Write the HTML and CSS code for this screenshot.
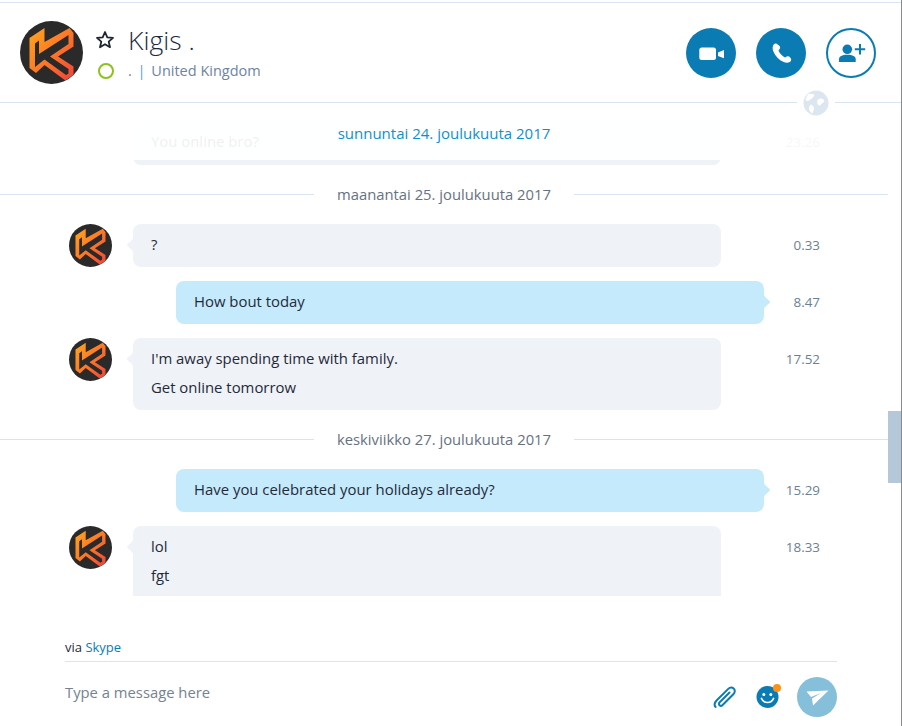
FILE: index.html
```html
<!DOCTYPE html>
<html>
<head>
    <title>Kigis . - Skype</title>
    <link rel="stylesheet" href="styles.css">
</head>
<body>
    <svg class="defs" width="0" height="0">
        <defs>
            <linearGradient id="logoGrad" x1="0.1" y1="0.1" x2="0.9" y2="0.9">
                <stop offset="0" stop-color="#ff9d1e"/>
                <stop offset="0.55" stop-color="#fb7428"/>
                <stop offset="1" stop-color="#f34c38"/>
            </linearGradient>
            <clipPath id="logoClip">
                <circle cx="31.5" cy="31.5" r="31"/>
            </clipPath>
            <symbol id="logo" viewBox="0 0 63 63">
                <circle cx="31.5" cy="31.5" r="31.5" fill="#2a2a2b"/>
                <g clip-path="url(#logoClip)">
                    <path d="M9.500 17L24.500 7V21L49.500 7L53.500 12V25.500L38 35.500L53.500 45.500V55L46 60L24.500 44L16 52L9.500 47Z" fill="url(#logoGrad)"/>
                    <path d="M15 22.500L19 19.500V33L48.500 14V23L30 35.500L48.500 48V52.500L46 54L24.500 38.500L15 46Z" fill="#2a2a2b"/>
                </g>
            </symbol>
        </defs>
    </svg>

    <div class="page">
        <header class="top">
            <svg class="avatar-big"><use href="#logo"/></svg>
            <div class="info">
                <svg class="star" viewBox="0 0 20 20">
                    <path d="M10 2l2.300 5.300 5.700.5-4.300 3.800 1.300 5.600-5-3-5 3 1.300-5.600L2 7.800l5.700-.5z" fill="none" stroke="#1d2533" stroke-width="1.800" stroke-linejoin="round"/>
                </svg>
                <div class="name">Kigis .</div>
                <div class="ring"></div>
                <div class="sub">. <span class="pipe">|</span> United Kingdom</div>
            </div>
            <div class="actions">
                <div class="round">
                    <svg viewBox="0 0 50 50" width="50" height="50">
                        <rect x="13.300" y="19.500" width="16.700" height="12.500" rx="2.500" fill="#fff"/>
                        <path d="M32 24.500L38 22V30.300L32 28z" fill="#fff"/>
                    </svg>
                </div>
                <div class="round">
                    <svg viewBox="0 0 50 50" width="50" height="50">
                        <path d="M21 16c-1-.8-2.600-.6-3.300.5-1.400 2-1.300 4.500-.4 6.700 2 4.800 5.600 8.700 10.400 10.800 2 .9 4.300 1 6.200-.1 1.200-.7 1.700-2.200 1-3.300l-1-1.400c-.7-1-2-1.200-3.100-.7l-1.700.9c-3-1.300-5.300-3.800-6.600-6.900l1.100-1.500c.7-.9.700-2.200 0-3.100z" fill="#fff"/>
                    </svg>
                </div>
                <div class="round outline">
                    <svg viewBox="0 0 50 50" width="50" height="50">
                        <circle cx="21.300" cy="21.300" r="4.800" fill="#0a7cb3"/>
                        <path d="M13 34v-2.800c0-2.800 3-4.500 8.300-4.500s8.400 1.700 8.400 4.500V34z" fill="#0a7cb3"/>
                        <path d="M34 16v10.500M28.800 21.300h10.400" stroke="#0a7cb3" stroke-width="2"/>
                    </svg>
                </div>
            </div>
            <div class="globe">
                <svg viewBox="0 0 26 26" width="26" height="26">
                    <circle cx="13" cy="13" r="12.500" fill="#dce6f0"/>
                    <path d="M6 3.500c2 .5 4 .3 5.500 1.500-.5 2-2.500 3-4 4.500C6 11 4 11.500 2.500 10 3 7.500 4 5 6 3.500zM14.500 10c2-1.500 4.500-2 6-.5 1 1.500.5 3-1 3.500-1.500.5-1.500 2.500-3 2.500-2 0-3-3.500-2-5.500zM8 14.500c1.500 1 3 1.500 3 3.500s-1 4-1.500 5.500c-2-.5-3-2.500-3.500-4.500-.3-1.800.5-3.500 2-4.500z" fill="#fff"/>
                </svg>
            </div>
        </header>

        <main class="transcript">
            <div class="row">
                <div class="spacer"></div>
                <div class="bubble tall">You online bro?</div>
                <div class="time">23.26</div>
            </div>

            <div class="date-row"><span class="rule"></span><span class="date">maanantai 25. joulukuuta 2017</span><span class="rule"></span></div>

            <div class="row">
                <svg class="avatar"><use href="#logo"/></svg>
                <div class="bubble in">?</div>
                <div class="time">0.33</div>
            </div>
            <div class="row">
                <div class="bubble out">How bout today</div>
                <div class="time">8.47</div>
            </div>
            <div class="row">
                <svg class="avatar"><use href="#logo"/></svg>
                <div class="bubble in">I'm away spending time with family.<br>Get online tomorrow</div>
                <div class="time">17.52</div>
            </div>

            <div class="date-row"><span class="rule"></span><span class="date">keskiviikko 27. joulukuuta 2017</span><span class="rule"></span></div>

            <div class="row">
                <div class="bubble out">Have you celebrated your holidays already?</div>
                <div class="time">15.29</div>
            </div>
            <div class="row">
                <svg class="avatar"><use href="#logo"/></svg>
                <div class="bubble in cut">lol<br>fgt</div>
                <div class="time">18.33</div>
            </div>

            <!-- header of the day that is scrolled past -->
            <div class="fade"></div>
            <div class="sticky-date">sunnuntai 24. joulukuuta 2017</div>
            <div class="thumb"></div>
        </main>

        <footer class="composer">
            <div class="via">via <a class="skype">Skype</a></div>
            <div class="input-row">
                <div class="placeholder">Type a message here</div>
                <svg class="clip" viewBox="0 0 24 24" width="24" height="24">
                    <path d="M17 7.500L7.200 17.300c-1 1-.9 2.300-.1 3 .8.700 2 .7 3-.3L20.800 9.300c1.900-1.900 1.900-4.300.4-5.700-1.500-1.400-3.800-1.400-5.700.5L4.300 15.300c-2.700 2.700-2.700 5.200-1.200 6.600" transform="translate(-.5 0)" fill="none" stroke="#0a7cb3" stroke-width="2" stroke-linecap="round"/>
                </svg>
                <div class="smile">
                    <svg viewBox="0 0 24 24" width="24" height="24">
                        <circle cx="11.500" cy="12" r="11" fill="#0a7cb3"/>
                        <circle cx="7.800" cy="9.500" r="1.500" fill="#fff"/>
                        <circle cx="14.800" cy="9.500" r="1.500" fill="#fff"/>
                        <path d="M5.500 13.500c1.300 3 3.500 4 6 4s4.700-1 6-4" fill="none" stroke="#fff" stroke-width="1.700" stroke-linecap="round"/>
                    </svg>
                    <span class="dot"></span>
                </div>
                <div class="send">
                    <svg viewBox="0 0 40 40" width="40" height="40">
                        <path d="M9.500 14.500L31.500 13.500 16 28.500l-1-7 9-5.500-10 4z" fill="#fff"/>
                    </svg>
                </div>
            </div>
        </footer>
    </div>
</body>
</html>
```

FILE: styles.css
```css
body {
    margin: 0;
    font-family: "Open Sans", "Noto Sans", sans-serif;
    background-color: #fff;
    color: #1f2a3a;
}

.defs {
    display: block;
    height: 0;
}

.page {
    width: 902px;
    height: 726px;
    box-sizing: border-box;
    border-right: 1px solid #8a8a8a;
    padding-top: 2px;
    overflow: hidden;
}

/* header */
.top {
    position: relative;
    z-index: 1;
    display: flex;
    align-items: center;
    height: 99px;
    padding: 0 25px 0 20px;
    border-top: 1px solid #d8e5f0;
    border-bottom: 1px solid #d8e5f0;
}

.avatar-big {
    width: 63px;
    height: 63px;
    flex: none;
}

.info {
    display: grid;
    grid-template-columns: 32px auto;
    grid-template-rows: 36px 26px;
    align-items: center;
    margin-left: 13px;
}

.star {
    width: 20px;
    height: 20px;
    margin-left: -1px;
}

.name {
    font-size: 26.5px;
    font-weight: 300;
    color: #1d2b3f;
}

.ring {
    width: 12px;
    height: 12px;
    margin-left: 2px;
    border: 2px solid #8cc21e;
    border-radius: 50%;
}

.sub {
    font-size: 14.5px;
    color: #6d84a3;
    white-space: pre;
}

.pipe {
    color: #5da3d8;
    margin: 0 2px;
}

.actions {
    display: flex;
    gap: 20px;
    margin-left: auto;
}

.round {
    width: 50px;
    height: 50px;
    border-radius: 50%;
    background-color: #0a7cb3;
}

.round svg {
    display: block;
}

.round.outline {
    position: relative;
    box-sizing: border-box;
    background-color: #fff;
    border: 2px solid #0a7cb3;
}

.round.outline svg {
    margin: -2px;
}

.globe {
    position: absolute;
    right: 66px;
    bottom: -14px;
    padding: 0 6px;
    background-color: #fff;
    line-height: 0;
}

/* messages */
.transcript {
    position: relative;
    height: 493px;
    padding-top: 18px;
    box-sizing: border-box;
    overflow: hidden;
    font-size: 14.9px;
}

.row {
    display: flex;
    align-items: flex-start;
    width: 888px;
    box-sizing: border-box;
    padding: 0 68px 0 69px;
    margin-bottom: 14px;
}

.avatar,
.spacer {
    width: 43px;
    height: 43px;
    flex: none;
}

.bubble {
    position: relative;
    box-sizing: border-box;
    width: 588px;
    padding: 6px 18px 8px;
    line-height: 29px;
    border-radius: 8px;
    flex: none;
}

.tall,
.in {
    margin-left: 21px;
    background-color: #eff3f8;
}

.tall {
    height: 44px;
}

.out {
    margin-left: 107px;
    background-color: #c5eafc;
}

.in::before,
.out::after {
    content: "";
    position: absolute;
    top: 13px;
    width: 6px;
    height: 16px;
    background-color: inherit;
}

.in::before {
    left: -6px;
    clip-path: path("M6 0C6 4 0 6 0 8C0 10 6 12 6 16Z");
}

.out::after {
    right: -6px;
    clip-path: path("M0 0C0 4 6 6 6 8C6 10 0 12 0 16Z");
}

.cut {
    border-radius: 8px 8px 0 0;
}

.time {
    margin-left: auto;
    padding-top: 7px;
    line-height: 29px;
    font-size: 13.4px;
    color: #6b7f96;
}

.date-row {
    display: grid;
    grid-template-columns: 1fr 260px 1fr;
    align-items: center;
    width: 888px;
    height: 30px;
    margin-bottom: 15px;
}

.rule {
    height: 1px;
    background-color: #d8e5f0;
}

.date {
    text-align: center;
    font-size: 14.8px;
    color: #66727f;
}

.fade {
    position: absolute;
    top: 0;
    left: 0;
    width: 888px;
    height: 57px;
    background-color: rgba(255, 255, 255, 0.93);
}

.sticky-date {
    position: absolute;
    top: 18px;
    left: 0;
    width: 888px;
    text-align: center;
    font-size: 15px;
    line-height: 24px;
    color: #0f8fcf;
}

.thumb {
    position: absolute;
    top: 308px;
    right: 0;
    width: 13px;
    height: 72px;
    background-color: #b5c8da;
}

/* message box */
.composer {
    margin: 0 64px 0 65px;
    padding-top: 42px;
}

.via {
    height: 23px;
    line-height: 18px;
    font-size: 13px;
    color: #1f2a3a;
    border-bottom: 1px solid #dbe3ec;
}

.skype {
    color: #0a7cb3;
}

.input-row {
    display: flex;
    align-items: center;
    margin-top: 15px;
}

.placeholder {
    flex: 1;
    font-size: 14.8px;
    color: #75828f;
    margin-top: -10px;
}

.smile {
    position: relative;
    width: 24px;
    height: 24px;
    margin-left: 19px;
}

.dot {
    position: absolute;
    top: -1px;
    right: -1px;
    width: 8px;
    height: 8px;
    border-radius: 50%;
    background-color: #fb9214;
}

.send {
    width: 40px;
    height: 40px;
    margin-left: 17px;
    border-radius: 50%;
    background-color: #86bfda;
    line-height: 0;
}
```
